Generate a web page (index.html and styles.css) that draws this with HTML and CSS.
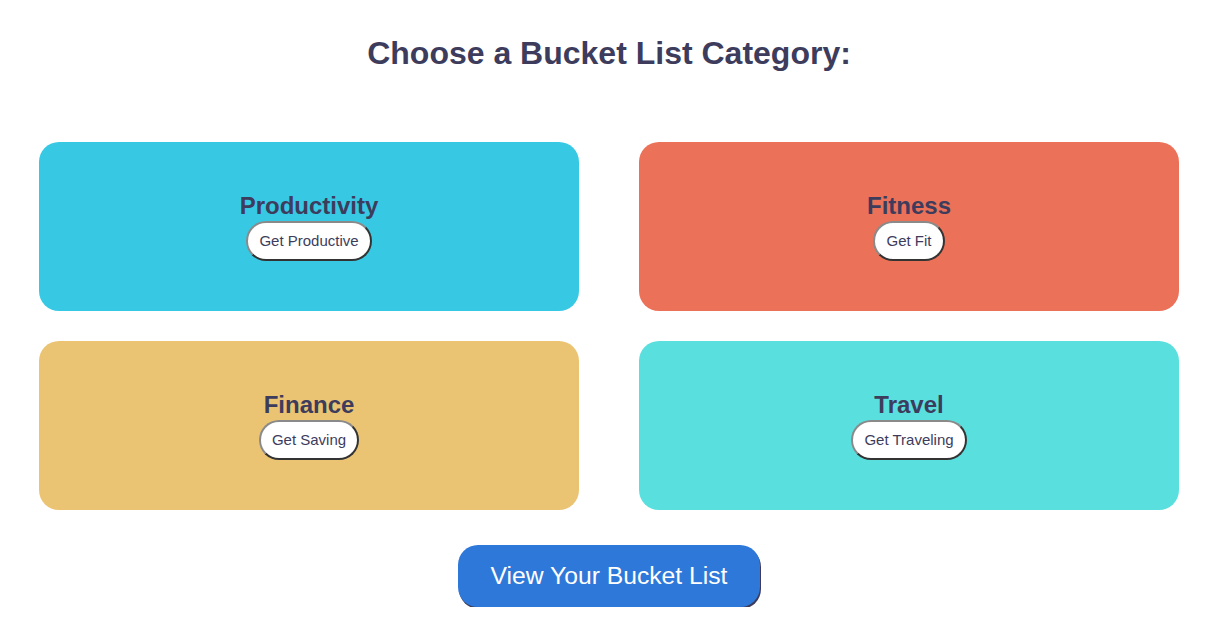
FILE: index.html
```html
<!DOCTYPE html>
<html lang="en">
<head>
<meta charset="utf-8">
<title>Bucket List</title>
<link rel="stylesheet" href="styles.css">
</head>
<body>
<main class="page">
  <h1 class="title">Choose a Bucket List Category:</h1>
  <section class="grid">
    <div class="card card-productivity">
      <h2 class="card-title">Productivity</h2>
      <button class="card-btn">Get Productive</button>
    </div>
    <div class="card card-fitness">
      <h2 class="card-title">Fitness</h2>
      <button class="card-btn">Get Fit</button>
    </div>
    <div class="card card-finance">
      <h2 class="card-title">Finance</h2>
      <button class="card-btn">Get Saving</button>
    </div>
    <div class="card card-travel">
      <h2 class="card-title">Travel</h2>
      <button class="card-btn">Get Traveling</button>
    </div>
  </section>
  <div class="actions">
    <button class="view-btn">View Your Bucket List</button>
  </div>
</main>
</body>
</html>
```
FILE: styles.css
```css
html, body {
  margin: 0;
  padding: 0;
  background: #ffffff;
}
body {
  font-family: "Liberation Sans", Arial, Helvetica, sans-serif;
  color: #3d3c5c;
}
.page {
  padding: 35px 30px 0 39px;
  display: flex;
  flex-direction: column;
}
.title {
  margin: 0;
  font-size: 32px;
  line-height: 37px;
  font-weight: bold;
  text-align: center;
  color: #3d3c5c;
}
.grid {
  margin-top: 70px;
  display: grid;
  grid-template-columns: 1fr 1fr;
  column-gap: 60px;
  row-gap: 30px;
}
.card {
  height: 169px;
  border-radius: 20px;
  display: flex;
  flex-direction: column;
  align-items: center;
  justify-content: center;
}
.card-productivity { background: #37c9e3; }
.card-fitness { background: #ec7159; }
.card-finance { background: #ebc473; }
.card-travel { background: #5adfdf; }
.card-title {
  margin: 0 0 2px;
  font-size: 24px;
  line-height: 26px;
  font-weight: bold;
  color: #3d3c5c;
}
.card-btn {
  height: 40px;
  padding: 0 11px;
  background: #ffffff;
  font-family: "Liberation Sans", Arial, Helvetica, sans-serif;
  font-size: 15px;
  color: #3d3c5c;
  border-radius: 20px;
  border: 2px solid;
  border-color: #8a8a8a #333333 #333333 #8a8a8a;
  cursor: pointer;
}
.actions {
  margin-top: 35px;
  display: flex;
  justify-content: center;
}
.view-btn {
  height: 62px;
  padding: 0 33px;
  background: #2e78d9;
  color: #ffffff;
  font-family: "Liberation Sans", Arial, Helvetica, sans-serif;
  font-size: 24.7px;
  border: none;
  border-radius: 20px;
  box-shadow: 1px 2px 0 #3d3c5c;
  cursor: pointer;
}
```
